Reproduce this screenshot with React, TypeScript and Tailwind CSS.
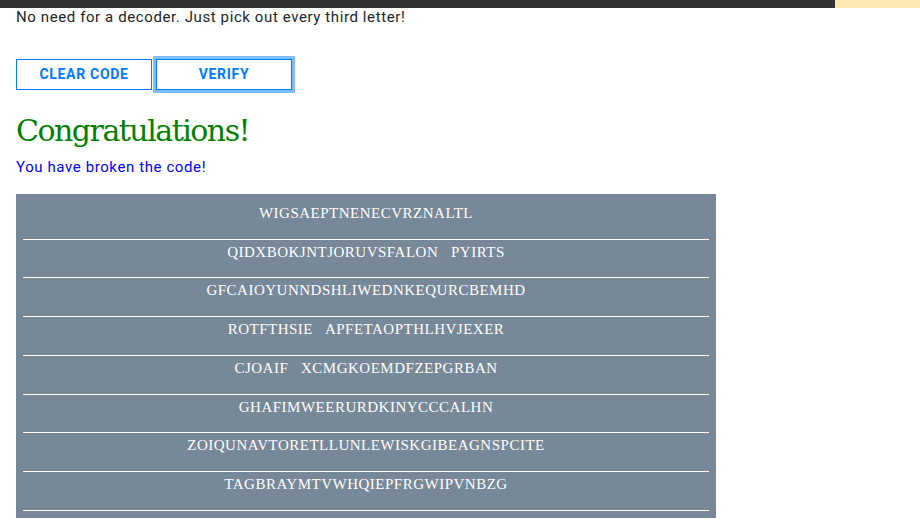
import React from "react";

const rows = [
  "WIGSAEPTNENECVRZNALTL",
  "QIDXBOKJNTJORUVSFALON   PYIRTS",
  "GFCAIOYUNNDSHLIWEDNKEQURCBEMHD",
  "ROTFTHSIE   APFETAOPTHLHVJEXER",
  "CJOAIF   XCMGKOEMDFZEPGRBAN",
  "GHAFIMWEERURDKINYCCCALHN",
  "ZOIQUNAVTORETLLUNLEWISKGIBEAGNSPCITE",
  "TAGBRAYMTVWHQIEPFRGWIPVNBZG",
];

export default function App() {
  return (
    <div className="h-[529px] w-[920px] overflow-hidden bg-white" style={{ fontFamily: "Roboto, sans-serif" }}>
      <div className="flex h-[8px]">
        <div className="w-[835px] bg-[#333333]" />
        <div className="flex-1 bg-[#fce7b2]" />
      </div>
      <div className="pl-4">
        <p className="text-[15px] leading-[18px] tracking-[0.6px] text-[#212529]">
          No need for a decoder. Just pick out every third letter!
        </p>
        <div className="mt-[33px] flex gap-1">
          <button className="h-[31px] w-[136px] border border-[#007bff] bg-white text-[14px] font-bold uppercase tracking-[0.7px] text-[#007bff]">
            Clear Code
          </button>
          <button className="h-[31px] w-[136px] border border-[#007bff] bg-white text-[14px] font-bold uppercase tracking-[0.7px] text-[#007bff] shadow-[0_0_0_3px_rgba(0,123,255,0.5)]">
            Verify
          </button>
        </div>
        <h1
          className="mt-[21px] text-[30px] leading-[40px] tracking-[-1.5px] text-[#008000]"
          style={{ fontFamily: '"DejaVu Serif", serif' }}
        >
          Congratulations!
        </h1>
        <p className="mt-[7px] text-[15px] leading-[18px] tracking-[0.6px] text-[#0000ff]">You have broken the code!</p>
        <div className="mt-[18px] w-[700px] bg-[#778899] px-[7px] pt-[7px] pb-[7px]">
          {rows.map((r) => (
            <div key={r} className="h-[38.71px] border-b border-white">
              <div
                className="whitespace-pre pt-[3px] text-center text-[15px] leading-[18px] tracking-[0.5px] text-white"
                style={{ fontFamily: '"Liberation Serif", serif' }}
              >
                {r}
              </div>
            </div>
          ))}
        </div>
      </div>
    </div>
  );
}
